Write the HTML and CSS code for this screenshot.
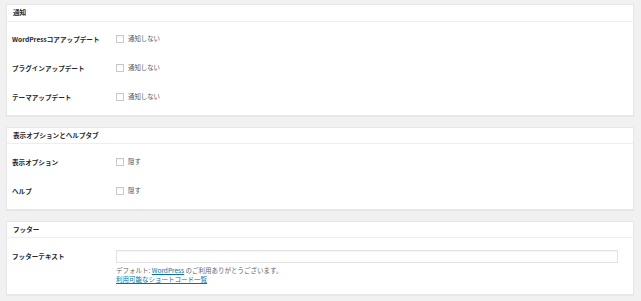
FILE: index.html
```html
<!DOCTYPE html>
<html lang="ja">
<head>
<meta charset="utf-8">
<link rel="stylesheet" href="styles.css">
</head>
<body>
<div class="wrap">
  <section class="panel p1">
    <h2 class="hndle">通知</h2>
    <div class="body">
      <div class="row"><div class="th">WordPressコアアップデート</div><div class="td"><label class="cb"><span class="box"></span>通知しない</label></div></div>
      <div class="row"><div class="th">プラグインアップデート</div><div class="td"><label class="cb"><span class="box"></span>通知しない</label></div></div>
      <div class="row"><div class="th">テーマアップデート</div><div class="td"><label class="cb"><span class="box"></span>通知しない</label></div></div>
    </div>
  </section>
  <section class="panel p2">
    <h2 class="hndle">表示オプションとヘルプタブ</h2>
    <div class="body">
      <div class="row"><div class="th">表示オプション</div><div class="td"><label class="cb"><span class="box"></span>隠す</label></div></div>
      <div class="row"><div class="th">ヘルプ</div><div class="td"><label class="cb"><span class="box"></span>隠す</label></div></div>
    </div>
  </section>
  <section class="panel p3">
    <h2 class="hndle">フッター</h2>
    <div class="body">
      <div class="frow">
        <div class="th fth">フッターテキスト</div>
        <div class="td ftd">
          <div class="input"></div>
          <p class="desc first">デフォルト: <a href="#">WordPress</a> のご利用ありがとうございます。</p>
          <p class="desc"><a href="#">利用可能なショートコード一覧</a></p>
        </div>
      </div>
    </div>
  </section>
</div>
</body>
</html>
```
FILE: styles.css
```css
* { box-sizing: border-box; }
html, body { margin: 0; padding: 0; }
body {
  background: #f1f1f1;
  width: 641px;
  height: 301px;
  overflow: hidden;
  font-family: "Noto Sans CJK JP", "Noto Sans", sans-serif;
  color: #23282d;
  font-size: 6.6px;
}
.wrap {
  padding: 4px 7px 0 6px;
  display: flex;
  flex-direction: column;
  gap: 11px;
}
.panel {
  background: #fff;
  border: 1px solid #e7e7e7;
  box-shadow: 0 1px 1px rgba(0,0,0,0.04);
}
.hndle {
  margin: 0;
  height: 17px;
  border-bottom: 1px solid #eee;
  padding-left: 6px;
  font-size: 6.6px;
  font-weight: 700;
  line-height: 15px;
}
.p2 .hndle, .p3 .hndle { height: 16px; line-height: 14px; }
.p1 .body { padding: 2px 0 4px; }
.p2 .body { padding: 3px 0 4px; }
.row {
  display: flex;
  align-items: center;
  height: 29px;
}
.th {
  width: 109px;
  padding-left: 5px;
  font-weight: 700;
  font-size: 6.6px;
  line-height: 10px;
}
.td { flex: 1; }
.cb {
  display: flex;
  align-items: center;
  gap: 4px;
  color: #555;
  font-size: 6.4px;
}
.box {
  width: 8px;
  height: 8px;
  border: 1px solid #c9c9c9;
  background: #fff;
  box-shadow: inset 0 1px 1px rgba(0,0,0,0.05);
}
.p3 .body { padding: 12px 0 10px; }
.frow { display: flex; align-items: flex-start; }
.fth { line-height: 12px; }
.ftd { padding-right: 15px; }
.input {
  height: 13px;
  border: 1px solid #e2e2e2;
  box-shadow: inset 0 1px 1px rgba(0,0,0,0.04);
  background: #fff;
}
.desc {
  margin: 0;
  color: #666;
  font-size: 6.5px;
  line-height: 9px;
}
.desc.first { margin-top: 3px; }
.desc a { color: #0073aa; text-decoration: underline; }
```
